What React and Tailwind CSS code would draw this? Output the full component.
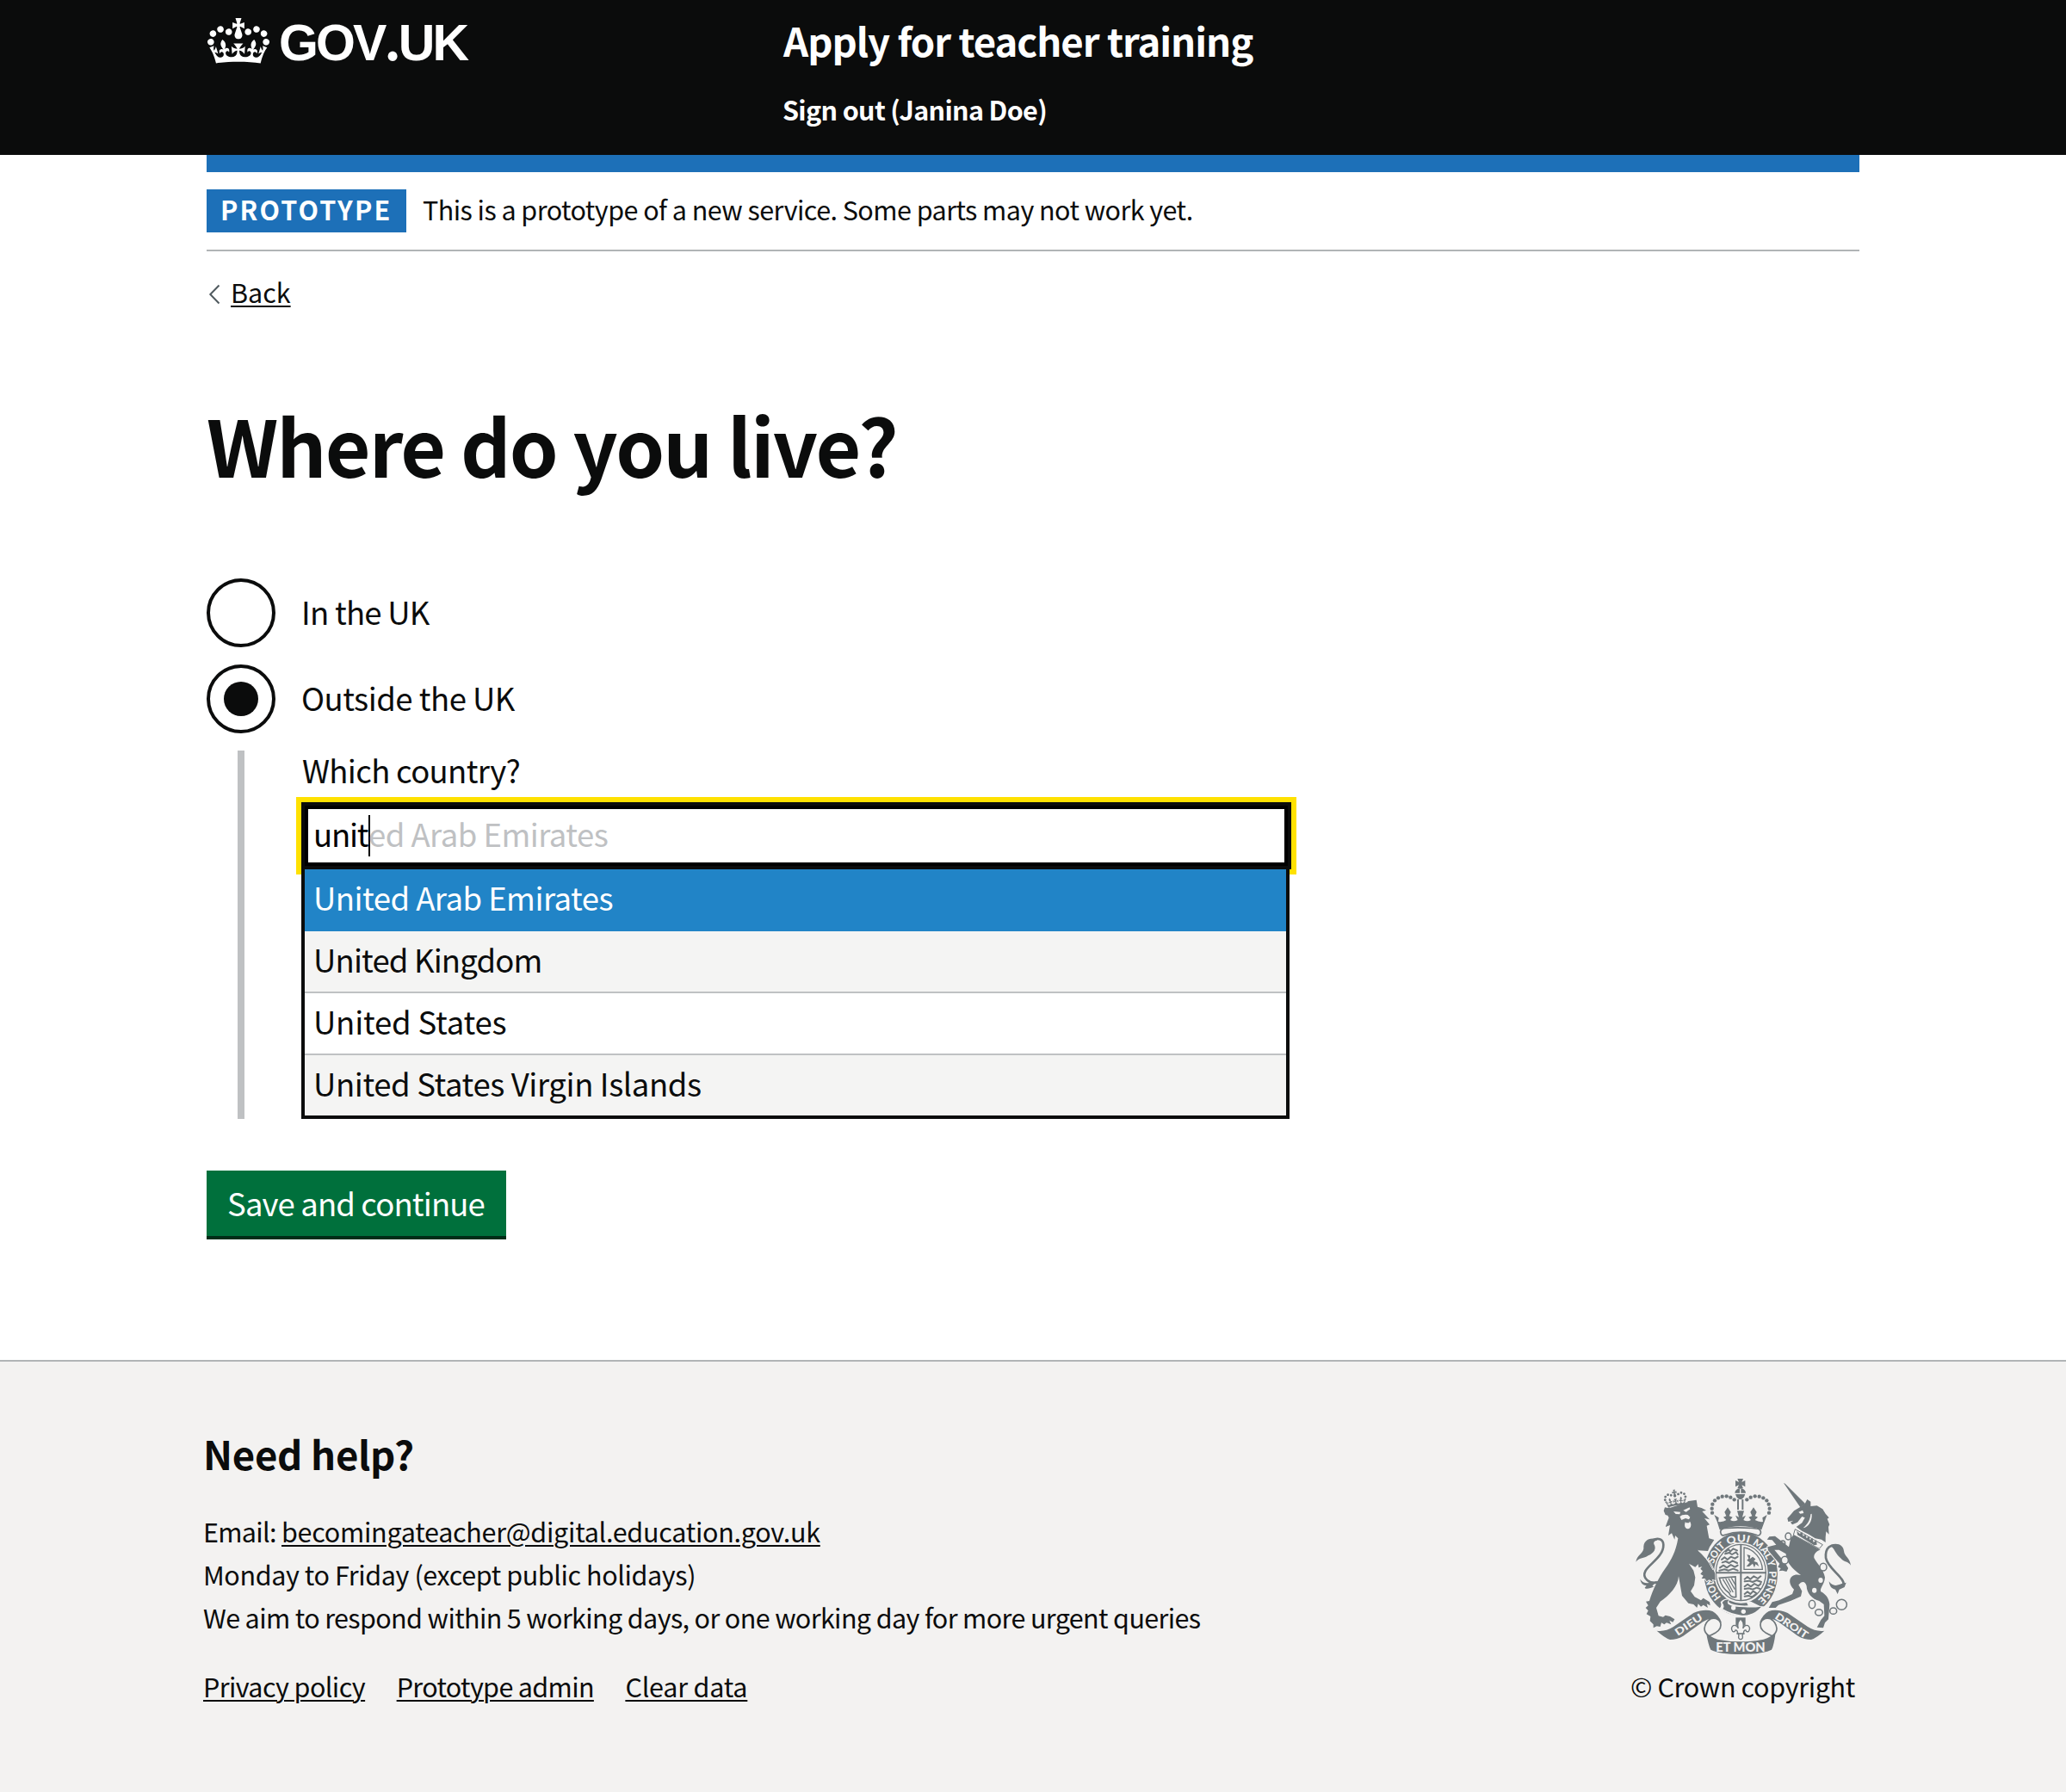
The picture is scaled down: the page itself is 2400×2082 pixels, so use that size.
import React from "react";

const PAPER = "#f3f2f1";
const SLATE = "#6f777b";

function point(angle, rx, ry) {
  const a = (angle * Math.PI) / 180;
  return [427 + rx * Math.cos(a), 386 + ry * Math.sin(a)];
}

function arcPath(from, to, rx, ry) {
  const [x0, y0] = point(from, rx, ry);
  const [x1, y1] = point(to, rx, ry);
  return `M${x0.toFixed(1)} ${y0.toFixed(1)}A${rx} ${ry} 0 0 1 ${x1.toFixed(1)} ${y1.toFixed(1)}`;
}

const MOTTO = [
  { id: "honi", text: "HON", from: 134, to: 172, length: 76 },
  { id: "soit", text: "SOIT", from: 198, to: 238, length: 74 },
  { id: "qui", text: "QUI", from: 243, to: 289, length: 76 },
  { id: "mal", text: "MAL", from: 293, to: 332, length: 76 },
  { id: "y", text: "Y", from: 337, to: 352, length: 20 },
  { id: "pense", text: "PENSE", from: 355, to: 413, length: 112 },
];

const PEARLS = [
  [327, 173], [326, 158], [328, 143], [336, 130], [348, 121], [362, 116], [377, 115], [391, 119], [404, 127],
  [525, 173], [527, 158], [524, 143], [517, 130], [505, 121], [491, 116], [476, 115], [461, 119], [448, 127],
];

const CROWN_PATH =
  "M25 30.2c3.5 1.5 7.7-.2 9.1-3.7 1.5-3.6-.2-7.8-3.9-9.2-3.6-1.4-7.6.3-9.1 3.9-1.4 3.5.3 7.5 3.9 9zM9 39.5c3.6 1.5 7.8-.2 9.2-3.7 1.5-3.6-.2-7.8-3.9-9.1-3.6-1.5-7.6.2-9.1 3.8-1.4 3.5.3 7.5 3.8 9zM4.4 57.2c3.5 1.5 7.7-.2 9.1-3.8 1.5-3.6-.2-7.7-3.9-9.1-3.5-1.5-7.6.3-9.1 3.8-1.4 3.5.3 7.6 3.9 9.1zm38.3-21.4c3.5 1.5 7.7-.2 9.1-3.8 1.5-3.6-.2-7.7-3.9-9.1-3.6-1.5-7.6.3-9.1 3.8-1.3 3.6.4 7.7 3.9 9.1zm64.4-5.6c-3.6 1.5-7.8-.2-9.1-3.7-1.5-3.6.2-7.8 3.8-9.2 3.6-1.4 7.7.3 9.2 3.9 1.3 3.5-.4 7.5-3.9 9zm15.9 9.3c-3.6 1.5-7.7-.2-9.1-3.7-1.5-3.6.2-7.8 3.7-9.1 3.6-1.5 7.7.2 9.2 3.8 1.5 3.5-.3 7.5-3.8 9zm4.7 17.7c-3.6 1.5-7.8-.2-9.2-3.8-1.5-3.6.2-7.7 3.9-9.1 3.6-1.5 7.7.3 9.2 3.8 1.3 3.5-.4 7.6-3.9 9.1zM89.3 35.8c-3.6 1.5-7.8-.2-9.2-3.8-1.4-3.6.2-7.7 3.9-9.1 3.6-1.5 7.7.3 9.2 3.8 1.4 3.6-.3 7.7-3.9 9.1zM69.7 17.7l8.9 4.7V9.3l-8.9 2.8c-.2-.3-.5-.6-.9-.9L72.4 0H59.6l3.5 11.2c-.3.3-.6.5-.9.9l-8.8-2.8v13.1l8.8-4.7c.3.3.6.7.9.9l-5 15.4v.1c-.2.8-.4 1.6-.4 2.4 0 4.1 3.1 7.5 7 8.1h.2c.3 0 .7.1 1 .1.4 0 .7 0 1-.1h.2c4-.6 7.1-4.1 7.1-8.1 0-.8-.1-1.7-.4-2.4V34l-5.1-15.4c.4-.2.7-.6 1-.9zM66 92.8c16.9 0 32.8 1.1 47.1 3.2 4-16.9 8.9-26.7 14-33.5l-9.6-3.4c1 4.9 1.1 7.2 0 10.2-1.5-1.4-3-4.3-4.2-8.7L108.6 76c2.8-2 5-3.2 7.5-3.3-4.4 9.4-10 11.9-13.6 11.2-4.3-.8-6.3-4.6-5.6-7.9 1-4.7 5.7-5.9 8-.5 4.3-8.7-3-11.4-7.6-8.8 7.1-7.2 7.9-13.5 2.1-21.1-8 6.1-8.1 12.3-4.5 20.8-4.7-5.4-12.1-2.5-9.5 6.2 3.4-5.2 7.9-2 7.2 3.1-.6 4.3-6.4 7.8-13.5 7.2-10.3-.9-10.9-8-11.2-13.8 2.5-.5 7.1 1.8 11 7.3L80.2 60c-4.1 4.4-8 5.3-12.3 5.4 1.4-4.4 8-11.6 8-11.6H55.5s6.4 7.2 7.9 11.6c-4.2-.1-8-1-12.3-5.4l1.4 16.4c3.9-5.5 8.5-7.7 10.9-7.3-.3 5.8-.9 12.8-11.1 13.8-7.2.6-12.9-2.9-13.5-7.2-.7-5 3.8-8.3 7.1-3.1 2.7-8.7-4.6-11.6-9.4-6.2 3.7-8.5 3.6-14.7-4.6-20.8-5.8 7.6-5 13.9 2.2 21.1-4.7-2.6-11.9.1-7.7 8.8 2.3-5.5 7.1-4.2 8.1.5.7 3.3-1.3 7.1-5.7 7.9-3.5.7-9-1.8-13.5-11.2 2.5.1 4.7 1.3 7.5 3.3l-4.7-15.4c-1.2 4.4-2.7 7.2-4.3 8.7-1.1-3-.9-5.3 0-10.2l-9.5 3.4c5 6.9 9.9 16.7 14 33.5 14.8-2.1 30.8-3.2 47.7-3.2z";

function Lion() {
  return (
    <g>
      <path
        d="M180 152L240 133L272 128L276 152L290 156L306 164L292 168L318 196L300 192L318 214L308 218L316 262L334 267L318 292L312 306L278 304L322 350L337 384L338 408L326 404L330 414L316 406L308 412L302 402L290 402L296 392L286 386L294 376L286 368L292 360L280 364L278 352L268 362L246 350L262 374L268 398L264 426L252 446L266 466L288 478L296 470L318 484L320 496L308 490L312 504L296 494L288 500L278 490L274 504L262 492L244 488L222 462L216 428L210 394C208 430 176 462 146 482L132 504L140 532L156 536L164 530L180 534L196 544L190 554L178 548L184 562L168 556L160 562L150 556L146 570L134 568L122 574L122 562L110 550L112 534L98 526L104 514L95 504L104 496L96 482L108 480C120 440 140 400 164 366C184 338 200 310 208 262L198 252L196 266L186 244L174 252L180 216L164 222L176 190L172 182L164 180L158 166L162 154L172 156Z"
        stroke={PAPER}
        strokeWidth="5"
        paintOrder="stroke"
      />
      <path d="M176 148L240 127L242 135L179 156Z" fill={PAPER} />
      <g transform="translate(158 92) rotate(-9 40 30) scale(0.61 0.6)">
        <path d={CROWN_PATH} />
      </g>
      <path d="M192 168L216 170L214 178L200 177ZM226 164L248 154L250 160L236 170Z" fill={PAPER} />
      <path d="M214 186Q222 178 242 180L250 188L246 196L234 192L220 198Z" fill={PAPER} />
      <ellipse cx="242" cy="215" rx="11" ry="14" fill={PAPER} />
      <path d="M232 200L250 202L246 208L236 208Z" />
      <path d="M278 304Q306 324 330 372" fill="none" stroke={PAPER} strokeWidth="3" />
      <path d="M142 414C108 424 82 400 94 376C108 350 158 326 157 284C156 262 136 260 120 268" fill="none" stroke={SLATE} strokeWidth="8" />
      <path d="M134 264C104 258 86 272 88 298C84 318 66 318 61 344C76 326 88 334 104 322C124 314 134 298 124 282C122 276 126 270 134 270Z" />
      <path d="M76 404C88 424 110 418 136 410C122 424 112 430 126 430C108 438 96 440 92 434L98 426C84 426 78 416 76 404Z" />
    </g>
  );
}

function Unicorn() {
  return (
    <g>
      <path d="M576 69L581 71L652 142L634 154Z" />
      <path d="M632 154L650 142L658 126L670 134L670 150L692 148L712 160L722 176L734 190L728 194L736 214L732 222L734 248L724 238L722 258L722 276L708 266L686 262L664 248L640 236L620 222L640 208L650 190L640 186L624 206L606 214L600 206L610 200L592 204L589 192L600 180L612 166Z" />
      <path d="M628 170L642 164L646 174L634 176Z" fill={PAPER} />
      <path d="M674 176C676 204 662 222 644 226C658 214 668 200 670 178Z" fill={PAPER} />
      <path
        d="M610 250L704 302C690 306 680 316 682 330C694 352 716 372 720 398C718 424 700 436 706 448C722 456 734 470 736 492L732 544L720 556L714 574L692 572L706 546L718 532L716 492L700 480C676 474 656 452 656 428C652 412 640 408 628 424L640 446L636 464L600 480L558 494L548 504L524 504L536 484L560 478L606 456L612 440C594 424 594 402 606 394C614 386 628 388 636 390C604 368 582 340 584 316L560 302L544 302L580 346L592 366L586 378L572 374L560 376L566 366L556 362L562 350L544 330L522 304L520 292L550 284L536 268L518 266L526 256L546 254L574 276L594 292L600 264Z"
        stroke={PAPER}
        strokeWidth="6"
        paintOrder="stroke"
      />
      <path d="M616 230L712 284L700 298L610 250Z" fill={PAPER} stroke={SLATE} strokeWidth="3" />
      <path d="M624 250L622 236L632 246L640 240L644 254L652 248L656 262L664 254L668 268L676 260L680 276L690 268L692 284L682 286Z" />
      <path d="M782 430C800 404 730 370 723 330C720 292 742 282 760 290" fill="none" stroke={SLATE} strokeWidth="8" />
      <path d="M740 284C766 276 784 286 786 306C788 326 806 328 810 356C800 340 788 346 776 332C758 318 754 300 744 292Z" />
      <path d="M734 412C748 432 762 426 778 420L794 416L788 432L770 440L764 456L756 440C742 438 736 428 734 412Z" />
      <g fill="none" stroke={SLATE} strokeWidth="4.5">
        <ellipse cx="592" cy="255" rx="10" ry="12" />
        <ellipse cx="573" cy="279" rx="8" ry="9" />
        <ellipse cx="580" cy="338" rx="12" ry="13" fill={PAPER} />
        <ellipse cx="714" cy="362" rx="12" ry="13" fill={PAPER} />
        <ellipse cx="675" cy="492" rx="11" ry="14" />
        <ellipse cx="699" cy="520" rx="13" ry="11" />
        <ellipse cx="749" cy="515" rx="12" ry="11" />
        <circle cx="778" cy="493" r="18" />
      </g>
      <ellipse cx="705" cy="408" rx="8" ry="9" fill={PAPER} />
      <ellipse cx="683" cy="443" rx="8" ry="9" fill={PAPER} />
    </g>
  );
}

function RoyalCrown() {
  return (
    <g>
      <path d="M415 54H435L430 66L442 60V82L430 76L435 88H415L420 76L408 82V60L420 66Z" />
      <path d="M406 104A19 17 0 0 1 444 104ZM408 108H442Q436 126 425 126Q414 126 408 108Z" />
      <path d="M423 89H427V106H423Z" fill={PAPER} />
      <path d="M414 126H420V162H414ZM430 126H436V162H430Z" />
      {PEARLS.map(([x, y]) => (
        <circle key={`${x}-${y}`} cx={x} cy={y} r="6.5" />
      ))}
      <path d="M334 180L350 190L348 204Q366 206 376 198L366 188L376 184L370 170L381 154L392 170L386 184L398 188L390 198Q402 206 416 198L408 182L420 188L414 166H438L432 188L444 182L436 198Q450 206 462 198L454 188L466 184L460 170L471 154L482 170L476 184L486 188L476 198Q490 206 504 204L502 190L518 180Q508 206 499 232Q425 208 353 232Q346 204 334 180Z" />
    </g>
  );
}

function Shield() {
  return (
    <g>
      <ellipse cx="427" cy="386" rx="128" ry="146" />
      <ellipse cx="427" cy="382" rx="94" ry="106" fill={PAPER} />
      <ellipse cx="427" cy="381" rx="87" ry="98" fill={PAPER} stroke={SLATE} strokeWidth="4" />
      <path d="M427 282V480M340 382H514" stroke={SLATE} strokeWidth="6" />
      <g fill="none" stroke={SLATE} strokeWidth="6" strokeLinecap="round" strokeLinejoin="round">
        <path d="M374 308L384 300L390 308L400 298L414 304M372 316L386 312L396 318L410 310L416 318" />
        <path d="M360 336L370 328L380 336L392 326L406 332L416 326M362 346L374 342L386 348L398 340L414 348" />
        <path d="M354 364L366 356L378 364L392 354L406 362L416 356M352 374L370 370L384 374L400 368L416 374" />
        <path d="M440 404L450 396L460 404L472 394L486 402L496 394M440 412L456 410L468 414L482 408L498 414" />
        <path d="M440 430L450 422L462 430L474 420L488 428L496 420M440 438L456 436L468 440L482 434L494 438" />
        <path d="M440 456L450 448L460 456L470 446L482 454M440 464L454 462L466 466L478 458" />
      </g>
      <path d="M438 294V370H502C500 334 474 300 438 294Z" fill="none" stroke={SLATE} strokeWidth="4" />
      <path d="M448 318L460 322L458 334L468 326L478 334L472 342L484 346L490 360L478 352L474 364L468 350L456 360L446 360L458 346L448 338L454 332Z" />
      <path d="M352 400L408 396L410 466Q392 470 386 452Q360 436 352 400Z" fill={PAPER} stroke={SLATE} strokeWidth="5" />
      <path d="M364 404L392 450M374 402L400 450M384 402L406 440M394 400L408 424" stroke={SLATE} strokeWidth="4" />
      <g fill={PAPER} fontFamily="Lato, sans-serif" fontWeight="900" fontSize="35">
        {MOTTO.map((word) => (
          <React.Fragment key={word.id}>
            <path id={word.id} d={arcPath(word.from, word.to + 12, 99, 112)} fill="none" />
            <text>
              <textPath href={`#${word.id}`} textLength={word.length} lengthAdjust="spacingAndGlyphs">
                {word.text}
              </textPath>
            </text>
          </React.Fragment>
        ))}
      </g>
      <path d="M356 484Q368 470 390 472L384 484Q400 498 452 496L446 484L462 482L494 498L520 500Q490 536 430 536Q390 532 352 506Q362 498 356 484Z" fill={PAPER} />
      <path d="M362 486Q370 474 386 476Q376 484 384 492Q400 502 440 502Q470 504 498 500Q470 532 430 530Q394 526 364 508Q372 498 362 486Z" />
      <circle cx="401" cy="504" r="8" fill={PAPER} />
      <circle cx="436" cy="517" r="8" fill={PAPER} />
      <path d="M356 240Q356 226 376 226Q425 222 480 228Q498 228 496 244Q492 256 480 250Q425 230 372 250Q358 256 356 240Z" fill={PAPER} stroke={SLATE} strokeWidth="5" />
    </g>
  );
}

function Ribbon() {
  const side =
    "M134 584Q164 588 192 570L262 522Q300 506 328 516Q350 528 360 556Q342 540 328 552Q308 560 304 576L300 570Q304 552 316 544Q304 546 284 560L226 602Q204 615 180 615Q160 608 134 584Z";
  const fold =
    "M322 542Q346 536 356 556Q362 576 340 590Q326 598 316 602Q300 592 300 576Q302 554 322 542Z";
  return (
    <g>
      <path d={side} />
      <path d={fold} fill={PAPER} stroke={SLATE} strokeWidth="5" />
      <g transform="matrix(-1 0 0 1 852 0)">
        <path d={side} />
        <path d={fold} fill={PAPER} stroke={SLATE} strokeWidth="5" />
      </g>
      <path d="M306 590Q320 606 346 614Q425 630 506 614Q532 606 548 590Q542 636 534 650Q500 666 425 666Q352 666 322 650Q314 636 306 590Z" />
      <g fill={PAPER} fontFamily="Lato, sans-serif" fontWeight="900" textAnchor="middle">
        <text x="426" y="656" fontSize="46" textLength="172" lengthAdjust="spacingAndGlyphs">ET MON</text>
        <text transform="translate(252 573) rotate(-34)" fontSize="35" textLength="108" lengthAdjust="spacingAndGlyphs">DIEU</text>
        <text transform="translate(597 576) rotate(34)" fontSize="35" textLength="130" lengthAdjust="spacingAndGlyphs">DROIT</text>
      </g>
      <path d="M409 538H443V566H409Z" />
      <path
        d="M426 542Q440 556 434 576Q440 562 452 566Q462 574 454 586Q446 590 444 582Q438 580 436 592L432 600Q436 612 426 614Q416 612 420 600L416 592Q414 580 408 582Q406 590 398 586Q390 574 400 566Q412 562 418 576Q412 556 426 542Z"
        fill={PAPER}
        stroke={SLATE}
        strokeWidth="4"
      />
      <path d="M412 594H440" stroke={SLATE} strokeWidth="5" />
    </g>
  );
}

function Crest() {
  return (
    <svg viewBox="60 54 750 612" className="block h-[204px] w-[250px]" fill={SLATE} aria-hidden="true">
      <RoyalCrown />
      <Shield />
      <Lion />
      <Unicorn />
      <Ribbon />
    </svg>
  );
}

const body = "text-[30.5px] whitespace-nowrap";
const large = "text-[36.5px] whitespace-nowrap";
const link = "underline decoration-2 underline-offset-[3px]";

function Header() {
  return (
    <header className="h-[180px] bg-[#0b0c0c] text-white">
      <div className="mx-auto flex w-[1920px]">
        <a className="flex w-[670px] items-start">
          <svg viewBox="0 0 132 97" className="ml-px mt-[21px] h-[53px] w-[72px] shrink-0" fill="currentColor" aria-hidden="true">
            <path d={CROWN_PATH} />
          </svg>
          <span className="ml-[11px] mt-[18px] h-[60px] font-['Liberation_Sans',sans-serif] text-[59px] font-bold leading-[64px] tracking-[-2.9px] whitespace-nowrap">
            GOV<span className="font-['Noto_Sans_CJK_SC',sans-serif] leading-[0]">.</span>UK
          </span>
        </a>
        <div>
          <div className="mt-[18px] text-[45.5px] font-bold leading-[57px] tracking-[-1.02px] whitespace-nowrap">Apply for teacher training</div>
          <div className="-ml-px mt-[32px] text-[30.5px] font-bold leading-[41px] tracking-[-0.66px] whitespace-nowrap">Sign out (Janina Doe)</div>
        </div>
      </div>
    </header>
  );
}

function Radio({ label, checked, tracking }) {
  return (
    <label className="flex h-[80px]">
      <span className="flex size-[80px] items-center justify-center rounded-full border-4 border-[#0b0c0c]">
        {checked && <span className="size-[40px] rounded-full bg-[#0b0c0c]" />}
      </span>
      <span className={`${large} ${tracking} pl-[30px] leading-[78px]`}>{label}</span>
    </label>
  );
}

const OPTIONS = [
  { name: "United Arab Emirates", style: "h-[72px] bg-[#2184c7] text-white tracking-[-0.53px]" },
  { name: "United Kingdom", style: "h-[72px] border-b-2 border-[#bfc1c3] bg-[#f4f4f3] tracking-[-0.85px]" },
  { name: "United States", style: "h-[72px] border-b-2 border-[#bfc1c3] bg-white tracking-[-0.2px]" },
  { name: "United States Virgin Islands", style: "h-[70px] bg-[#f4f4f3] tracking-[-0.39px]" },
];

function CountryPicker() {
  return (
    <div className="ml-[36px] mt-[20px] h-[428px] border-l-8 border-[#bfc1c3] pl-[66px]">
      <div className={`${large} pl-px leading-[46px] tracking-[-0.68px]`}>Which country?</div>
      <div className="mt-[14px] h-[78px] w-[1150px] bg-[#0b0c0c] p-1 shadow-[0_0_0_6px_#ffe100]">
        <div className="flex h-[70px] border-4 border-black bg-white pl-[6px]">
          <span className={`${large} w-[64px] leading-[58px] tracking-[-1.2px] text-black`}>unit</span>
          <span className="mt-[7px] h-[48px] w-[2px] bg-black" />
          <span className={`${large} -ml-[2px] leading-[58px] tracking-[-0.53px] text-[#bfc1c3]`}>ed Arab Emirates</span>
        </div>
      </div>
      <ul className="relative w-[1148px] border-4 border-t-0 border-[#0b0c0c]">
        {OPTIONS.map((option) => (
          <li key={option.name} className={`${large} ${option.style} pl-[10px] leading-[66px]`}>
            {option.name}
          </li>
        ))}
      </ul>
    </div>
  );
}

function Footer() {
  return (
    <footer className="mt-[140px] h-[502px] border-t-2 border-[#b1b4b6] bg-[#f3f2f1]">
      <div className="mx-auto flex w-[1920px] items-end justify-between pt-[76px]">
        <div className="-ml-[4px]">
          <h2 className="text-[45.5px] font-bold leading-[60px] tracking-[-0.3px]">Need help?</h2>
          <div className={`${body} mt-[36px] leading-[50px]`}>
            <p className="flex">
              <span className="w-[91px] tracking-[-0.69px]">Email: </span>
              <a className={`${link} tracking-[-0.27px]`}>becomingateacher@digital.education.gov.uk</a>
            </p>
            <p className="tracking-[-0.4px]">Monday to Friday (except public holidays)</p>
            <p className="tracking-[-0.63px]">We aim to respond within 5 working days, or one working day for more urgent queries</p>
          </div>
          <nav className={`${body} mt-[35px] flex gap-[36.5px] leading-[40px]`}>
            <a className={`${link} tracking-[-0.6px]`}>Privacy policy</a>
            <a className={`${link} tracking-[-0.65px]`}>Prototype admin</a>
            <a className={`${link} tracking-[-0.2px]`}>Clear data</a>
          </nav>
        </div>
        <div className="mr-[4px] w-[262px]">
          <div className="pl-[6px]">
            <Crest />
          </div>
          <div className={`${body} mt-[17px] leading-[40px] tracking-[-0.35px]`}>© Crown copyright</div>
        </div>
      </div>
    </footer>
  );
}

export default function App() {
  return (
    <div className="h-[2082px] w-[2400px] overflow-hidden bg-white font-['Noto_Sans_CJK_SC',sans-serif] text-[#0b0c0c]">
      <Header />
      <div className="mx-auto w-[1920px]">
        <div className="h-[20px] bg-[#1d70b8]" />
        <div className="flex gap-[19px] border-b-2 border-[#b1b4b6] py-[20px]">
          <strong className="h-[50px] w-[232px] bg-[#1d70b8] pl-[16px] text-[30.5px] font-bold leading-[46px] tracking-[2.2px] text-white">PROTOTYPE</strong>
          <span className={`${body} leading-[47px] tracking-[-0.545px]`}>This is a prototype of a new service. Some parts may not work yet.</span>
        </div>
        <a className="mt-[26px] flex h-[40px]">
          <svg viewBox="0 0 28 40" className="h-[40px] w-[28px]" fill="none" stroke="#505a5f" strokeWidth="2" aria-hidden="true">
            <path d="M14.5 13.5L4.3 24L14.5 34.5" />
          </svg>
          <span className={`${body} ${link} leading-[42px]`}>Back</span>
        </a>
        <main>
          <h1 className="mt-[106px] text-[91px] font-bold leading-[102px] tracking-[-1.9px]">Where do you live?</h1>
          <div className="mt-[106px] flex flex-col gap-[20px]">
            <Radio label="In the UK" tracking="tracking-[-0.75px]" />
            <Radio label="Outside the UK" tracking="tracking-[-0.5px]" checked />
          </div>
          <CountryPicker />
          <button className={`${large} mt-[60px] block h-[80px] w-[348px] border-b-4 border-[#002d18] bg-[#00703c] pl-[24px] text-left leading-[72px] tracking-[-0.87px] text-white`}>
            Save and continue
          </button>
        </main>
      </div>
      <Footer />
    </div>
  );
}
